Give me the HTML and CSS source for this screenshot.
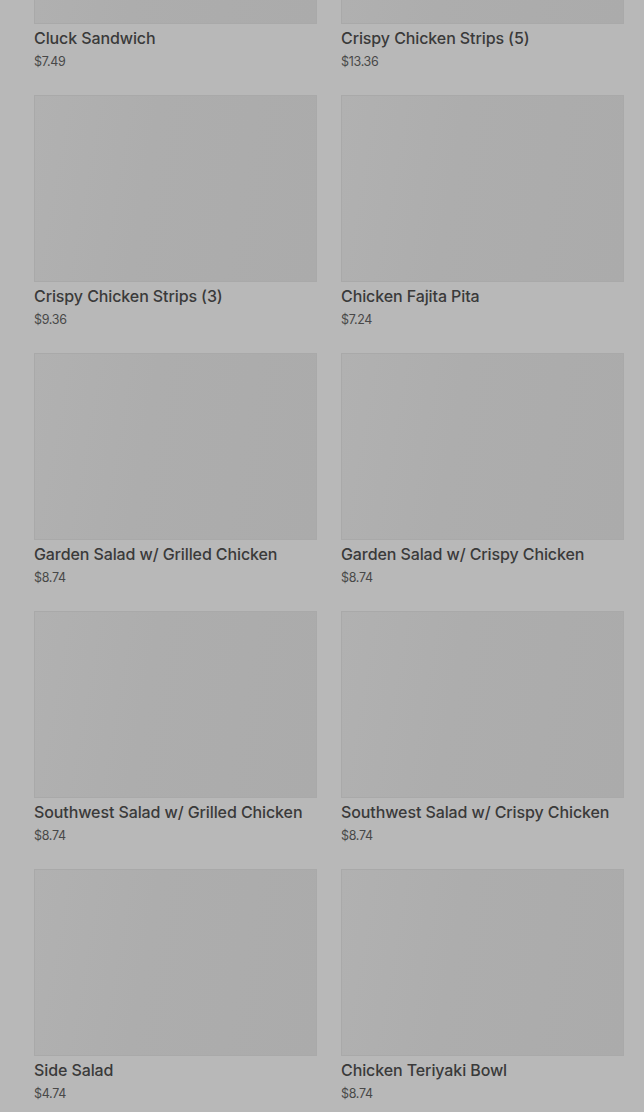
FILE: index.html
```html
<!DOCTYPE html>
<html lang="en">
<head>
    <meta charset="UTF-8">
    <meta name="viewport" content="width=device-width, initial-scale=1.0">
    <title>Menu</title>
    <link rel="stylesheet" href="styles.css">
</head>
<body>

    <div class="menu-grid">
        <div class="item">
            <div class="item-img"></div>
            <div class="item-name">Cluck Sandwich</div>
            <div class="item-price">$7.49</div>
        </div>
        <div class="item">
            <div class="item-img"></div>
            <div class="item-name">Crispy Chicken Strips (5)</div>
            <div class="item-price">$13.36</div>
        </div>
        <div class="item">
            <div class="item-img"></div>
            <div class="item-name">Crispy Chicken Strips (3)</div>
            <div class="item-price">$9.36</div>
        </div>
        <div class="item">
            <div class="item-img"></div>
            <div class="item-name">Chicken Fajita Pita</div>
            <div class="item-price">$7.24</div>
        </div>
        <div class="item">
            <div class="item-img"></div>
            <div class="item-name">Garden Salad w/ Grilled Chicken</div>
            <div class="item-price">$8.74</div>
        </div>
        <div class="item">
            <div class="item-img"></div>
            <div class="item-name">Garden Salad w/ Crispy Chicken</div>
            <div class="item-price">$8.74</div>
        </div>
        <div class="item">
            <div class="item-img"></div>
            <div class="item-name">Southwest Salad w/ Grilled Chicken</div>
            <div class="item-price">$8.74</div>
        </div>
        <div class="item">
            <div class="item-img"></div>
            <div class="item-name">Southwest Salad w/ Crispy Chicken</div>
            <div class="item-price">$8.74</div>
        </div>
        <div class="item">
            <div class="item-img"></div>
            <div class="item-name">Side Salad</div>
            <div class="item-price">$4.74</div>
        </div>
        <div class="item">
            <div class="item-img"></div>
            <div class="item-name">Chicken Teriyaki Bowl</div>
            <div class="item-price">$8.74</div>
        </div>
    </div>

</body>
</html>
```

FILE: styles.css
```css
html, body { height: 100%; }
body { margin: 0; background: #b8b8b8; font-family: Inter, "Noto Sans", sans-serif; color: #3a3a3a; overflow: hidden; }
.menu-grid { display: grid; grid-template-columns: 283px 283px; column-gap: 24px; row-gap: 24px; padding: 0 20px 0 34px; margin-top: -163px; }
.item-img { height: 187px; border: 1px solid #a9a9a9; box-sizing: border-box; background: linear-gradient(100deg, #b1b1b1 0%, #adadad 40%, #ababab 100%); }
.item-name { margin-top: 4px; font-size: 16px; line-height: 20px; font-weight: 500; letter-spacing: -0.1px; white-space: nowrap; }
.item-price { margin-top: 5px; font-size: 12.5px; line-height: 18px; letter-spacing: -0.3px; color: #484848; }
```
